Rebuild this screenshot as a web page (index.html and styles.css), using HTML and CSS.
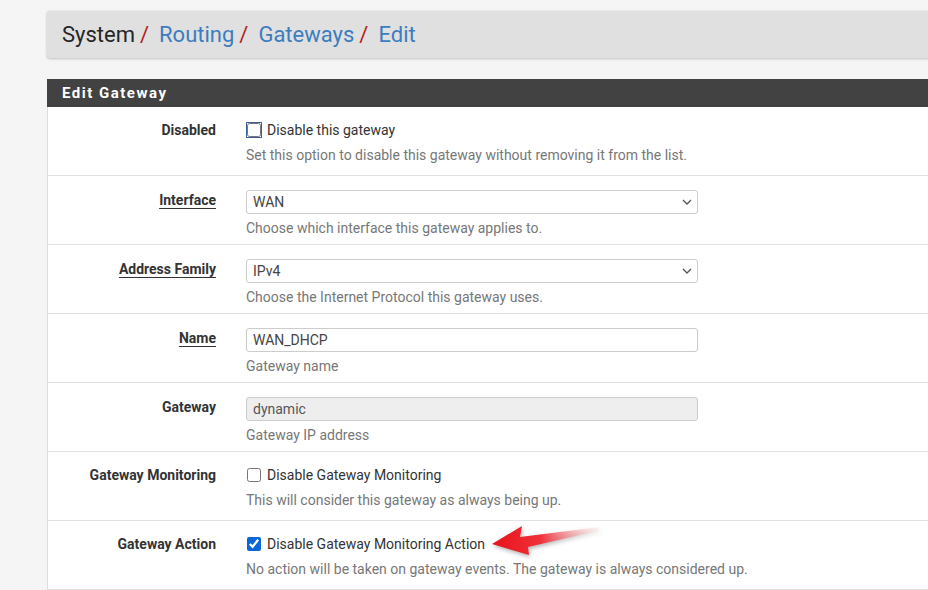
FILE: index.html
```html
<!DOCTYPE html>
<html lang="en">
<head>
    <meta charset="UTF-8">
    <meta name="viewport" content="width=device-width, initial-scale=1.0">
    <title>System / Routing / Gateways / Edit</title>
    <link rel="stylesheet" href="styles.css">
</head>
<body>
    <div class="page">
        <div class="crumbs">
            <span class="crumb">System</span><span class="sep">/</span>
            <a class="crumb crumb-link" href="#">Routing</a><span class="sep">/</span>
            <a class="crumb crumb-link" href="#">Gateways</a><span class="sep">/</span>
            <a class="crumb crumb-link" href="#">Edit</a>
        </div>

        <div class="panel">
            <div class="panel-heading">Edit Gateway</div>
            <div class="panel-body">
                <div class="row row-check">
                    <div class="row-label">Disabled</div>
                    <div class="row-field">
                        <label class="check"><input type="checkbox" class="focused"> Disable this gateway</label>
                        <div class="help">Set this option to disable this gateway without removing it from the list.</div>
                    </div>
                </div>

                <div class="row">
                    <div class="row-label"><span class="req">Interface</span></div>
                    <div class="row-field">
                        <div class="select-wrap">
                            <select class="field">
                                <option>WAN</option>
                                <option>LAN</option>
                            </select>
                            <svg class="chevron" width="10" height="6" viewBox="0 0 10 6"><path d="M1 1l4 4 4-4" fill="none" stroke="#555" stroke-width="1.3"/></svg>
                        </div>
                        <div class="help">Choose which interface this gateway applies to.</div>
                    </div>
                </div>

                <div class="row">
                    <div class="row-label"><span class="req">Address Family</span></div>
                    <div class="row-field">
                        <div class="select-wrap">
                            <select class="field">
                                <option>IPv4</option>
                                <option>IPv6</option>
                            </select>
                            <svg class="chevron" width="10" height="6" viewBox="0 0 10 6"><path d="M1 1l4 4 4-4" fill="none" stroke="#555" stroke-width="1.3"/></svg>
                        </div>
                        <div class="help">Choose the Internet Protocol this gateway uses.</div>
                    </div>
                </div>

                <div class="row">
                    <div class="row-label"><span class="req">Name</span></div>
                    <div class="row-field">
                        <input type="text" class="field" value="WAN_DHCP">
                        <div class="help">Gateway name</div>
                    </div>
                </div>

                <div class="row">
                    <div class="row-label">Gateway</div>
                    <div class="row-field">
                        <input type="text" class="field" value="dynamic" disabled>
                        <div class="help">Gateway IP address</div>
                    </div>
                </div>

                <div class="row row-check">
                    <div class="row-label">Gateway Monitoring</div>
                    <div class="row-field">
                        <label class="check"><input type="checkbox"> Disable Gateway Monitoring</label>
                        <div class="help">This will consider this gateway as always being up.</div>
                    </div>
                </div>

                <div class="row row-check">
                    <div class="row-label">Gateway Action</div>
                    <div class="row-field">
                        <label class="check"><input type="checkbox" checked> Disable Gateway Monitoring Action</label>
                        <div class="help">No action will be taken on gateway events. The gateway is always considered up.</div>
                        <!-- red pointer arrow drawn over the form -->
                        <svg class="pointer" width="120" height="46" viewBox="0 0 120 46">
                            <defs>
                                <linearGradient id="arrowFill" x1="0" y1="0" x2="1" y2="0">
                                    <stop offset="0" stop-color="#e8121a"/>
                                    <stop offset="0.45" stop-color="#f0303a"/>
                                    <stop offset="1" stop-color="#ffd6d6" stop-opacity="0.2"/>
                                </linearGradient>
                            </defs>
                            <polygon points="4,25 34,7 32,18 112,8 110,12 40,28 41,36" fill="url(#arrowFill)"/>
                        </svg>
                    </div>
                </div>

                <div class="row row-check">
                    <div class="row-label"></div>
                    <div class="row-field"></div>
                </div>
            </div>
        </div>
    </div>
</body>
</html>
```

FILE: styles.css
```css
:root {
    --page-bg: #f5f5f5;
    --crumb-bg: #e0e0e0;
    --link-color: #3b7dbf;
    --sep-color: #b3201f;
    --heading-bg: #424242;
    --text-color: #333;
    --help-color: #777;
    --line-color: #e2e2e2;
}

* {
    box-sizing: border-box;
    margin: 0;
    padding: 0;
}

html, body {
    overflow: hidden;
}

body {
    background-color: var(--page-bg);
    color: var(--text-color);
    font-family: Roboto, "Liberation Sans", sans-serif;
    font-size: 14px;
}

.page {
    margin-left: 47px;
    width: 1000px;
    padding-top: 11px;
}

/* breadcrumb bar */
.crumbs {
    height: 47px;
    display: flex;
    align-items: center;
    padding-left: 15px;
    background-color: var(--crumb-bg);
    border-radius: 3px;
    box-shadow: 0 1px 3px rgba(0, 0, 0, 0.2), 0 0 1px rgba(0, 0, 0, 0.15);
    font-size: 22px;
}

.crumb {
    color: #262626;
    text-decoration: none;
}

.crumb-link {
    color: var(--link-color);
}

.sep {
    color: var(--sep-color);
    margin: 0 10px 0 5px;
}

/* panel */
.panel {
    margin-top: 21px;
    background: white;
    border: 1px solid #ddd;
    border-top: none;
}

.panel-heading {
    height: 28px;
    line-height: 28px;
    padding-left: 15px;
    background-color: var(--heading-bg);
    color: white;
    font-size: 15px;
    font-weight: bold;
    letter-spacing: 1.5px;
    margin-left: -1px;
    margin-right: -1px;
}

.row {
    display: grid;
    grid-template-columns: 168px 1fr;
    column-gap: 30px;
    height: 69px;
    padding-top: 14px;
    border-bottom: 1px solid var(--line-color);
}

.row-label {
    text-align: right;
    font-weight: bold;
    line-height: 20px;
    color: var(--text-color);
}

.req {
    text-decoration: underline;
    text-underline-offset: 3px;
}

.row-field {
    position: relative;
}

.field {
    display: block;
    width: 452px;
    height: 24px;
    padding: 0 6px;
    border: 1px solid #ccc;
    border-radius: 3px;
    background: white;
    color: #444;
    font-family: Roboto, "Liberation Sans", sans-serif;
    font-size: 14px;
    outline: none;
}

.field:disabled {
    background-color: #eee;
    color: #555;
}

select.field {
    appearance: none;
    -webkit-appearance: none;
}

.select-wrap {
    position: relative;
    width: 452px;
}

.chevron {
    position: absolute;
    right: 6px;
    top: 9px;
}

.help {
    margin-top: 4px;
    line-height: 20px;
    color: var(--help-color);
    white-space: nowrap;
}

/* checkbox rows */
.row-check {
    padding-top: 12px;
}

.row-check .row-label {
    line-height: 22px;
}

.check {
    display: flex;
    align-items: center;
    height: 22px;
    color: var(--text-color);
}

.check input {
    width: 14px;
    height: 14px;
    margin: 0 6px 0 1px;
    accent-color: #0b67d8;
}

.check input.focused {
    outline: 1px solid #3d5f95;
    outline-offset: 0;
    border-radius: 2px;
}

.pointer {
    position: absolute;
    left: 242px;
    top: -14px;
    filter: drop-shadow(1px 2px 2px rgba(0, 0, 0, 0.3));
}
```
